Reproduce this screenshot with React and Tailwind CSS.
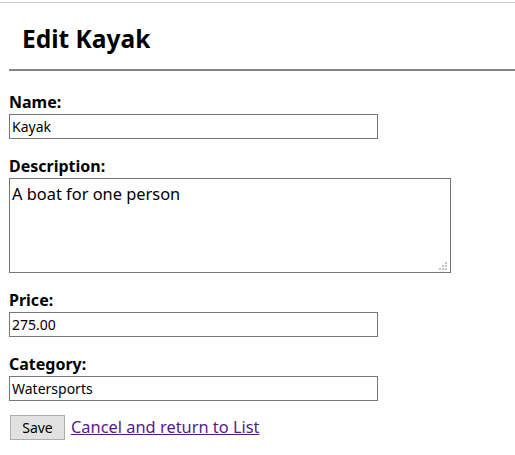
export default function App() {
  return (
    <div className="min-h-[455px] bg-white text-black font-['Noto_Sans',sans-serif]">
      <div className="h-[2px]" />
      <div className="border-t border-[#cfcfcf]" />
      <h2 className="pl-[22px] pt-[19px] pb-[13px] text-[24.5px] leading-[34px] font-bold">Edit Kayak</h2>
      <div className="ml-[9px] h-[2px] bg-[#858585]" />
      <form className="pl-[9px] pt-[22px]" onSubmit={(e) => e.preventDefault()}>
        <Field label="Name:">
          <input
            defaultValue="Kayak"
            className="block w-[369px] h-[25px] border border-[#767676] px-[2px] text-[14px] outline-none"
          />
        </Field>
        <Field label="Description:">
          <div className="relative w-[442px]">
            <textarea
              defaultValue="A boat for one person"
              className="block w-[442px] h-[95px] resize-none border border-[#767676] px-[2px] py-[4px] text-[16.4px] leading-[21px] outline-none"
            />
            <svg
              className="absolute right-[4px] bottom-[3px]"
              width="8"
              height="8"
              viewBox="0 0 8 8"
              fill="#c4c4c4"
            >
              <rect x="6" y="0" width="2" height="2" />
              <rect x="3" y="3" width="2" height="2" />
              <rect x="6" y="3" width="2" height="2" />
              <rect x="0" y="6" width="2" height="2" />
              <rect x="3" y="6" width="2" height="2" />
              <rect x="6" y="6" width="2" height="2" />
            </svg>
          </div>
        </Field>
        <Field label="Price:">
          <input
            defaultValue="275.00"
            className="block w-[369px] h-[25px] border border-[#767676] px-[2px] text-[14px] outline-none"
          />
        </Field>
        <Field label="Category:">
          <input
            defaultValue="Watersports"
            className="block w-[369px] h-[25px] border border-[#767676] px-[2px] text-[14px] outline-none"
          />
        </Field>
        <div className="flex items-center gap-[6px] -mt-[4px]">
          <button
            type="submit"
            className="ml-[1px] w-[55px] h-[25px] bg-[#e1e1e1] border border-[#adadad] text-[14px]"
          >
            Save
          </button>
          <a href="#" className="text-[16.4px] text-[#551a8b] underline">
            Cancel and return to List
          </a>
        </div>
      </form>
    </div>
  )
}

function Field({ label, children }) {
  return (
    <div className="mb-[18px]">
      <label className="block text-[16px] leading-[19px] font-bold mb-[2px]">{label}</label>
      {children}
    </div>
  )
}
